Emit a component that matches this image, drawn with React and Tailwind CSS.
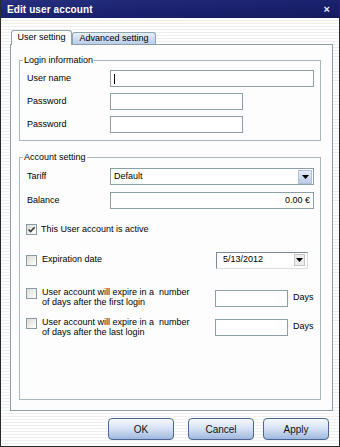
import React from "react";

const font = { fontFamily: '"Liberation Sans", Arial, sans-serif' };

function TextBox({ w, children, align = "left" }) {
    return (
        <div
            className={`h-[17px] border border-[#8c9fa8] bg-white flex items-center px-[3px] text-[9px] text-black ${align === "right" ? "justify-end" : ""}`}
            style={{ width: w }}
        >
            {children}
        </div>
    );
}

function Check({ checked }) {
    return (
        <div className="w-[11px] h-[11px] shrink-0 border border-[#8a9aa6] bg-gradient-to-br from-[#dcdcd8] to-[#ffffff] flex items-center justify-center">
            {checked && (
                <svg width="9" height="9" viewBox="0 0 9 9">
                    <path d="M1.5 4.5 L3.6 6.6 L7.6 2.2" fill="none" stroke="#3a3a3a" strokeWidth="1.6" />
                </svg>
            )}
        </div>
    );
}

function Arrow() {
    return (
        <svg width="7" height="4" viewBox="0 0 7 4">
            <path d="M0 0 H7 L3.5 4 Z" fill="#000" />
        </svg>
    );
}

function Btn({ label, w, className = "" }) {
    return (
        <div
            className={`h-[22px] rounded-[4px] border border-[#4c6690] bg-gradient-to-b from-[#f6f9fe] via-[#d4e0f3] to-[#9fb7de] flex items-center justify-center text-[10px] text-[#111] ${className}`}
            style={{ width: w }}
        >
            {label}
        </div>
    );
}

export default function App() {
    return (
        <div className="w-[340px] h-[447px] flex flex-col border-l border-r border-b border-[#2a2a2a] overflow-hidden" style={font}>
            {/* title bar */}
            <div className="h-[18px] shrink-0 flex items-center justify-between pl-[6px] pr-[9px] bg-gradient-to-br from-[#26307e] via-[#1b2270] to-[#151b5e]">
                <span className="text-white font-bold text-[10px] tracking-[0.1px]">Edit user account</span>
                <span className="text-[#e8ecff] font-bold text-[11px] leading-none">×</span>
            </div>

            <div className="flex-1 flex flex-col bg-[repeating-linear-gradient(180deg,#ffffff_0px,#ffffff_2px,#eeeeee_2px,#eeeeee_3px)]">
                {/* tabs */}
                <div className="flex items-end pl-[10px] pt-[12px] h-[26px]">
                    <div className="relative z-10 h-[15px] w-[61px] -mb-px rounded-t-[3px] border border-b-0 border-[#8fa3b0] bg-[#fcfcfc] flex items-center justify-center text-[9px] text-black">
                        User setting
                    </div>
                    <div className="h-[12px] w-[84px] rounded-t-[3px] border border-b-0 border-[#8fa3b0] bg-gradient-to-b from-[#e6eef8] to-[#b9cde8] flex items-center justify-center text-[9px] text-black">
                        Advanced setting
                    </div>
                </div>

                {/* panel */}
                <div className="ml-[9px] w-[323px] h-[367px] border border-[#8f9ea4] bg-[#fdfdfd] flex flex-col">
                    {/* Login information */}
                    <div className="relative ml-[8px] mt-[15px] w-[302px] h-[81px] border border-[#a8b8bc] flex flex-col pl-[7px] pt-[9px] gap-[6px]">
                        <span className="absolute -top-[7px] left-[3px] bg-[#fdfdfd] px-[1px] text-[9px] text-black leading-[12px]">Login information</span>
                        <div className="flex items-center">
                            <span className="w-[83px] text-[9px] text-black">User name</span>
                            <TextBox w={204}>
                                <span className="w-px h-[10px] bg-black" />
                            </TextBox>
                        </div>
                        <div className="flex items-center">
                            <span className="w-[83px] text-[9px] text-black">Password</span>
                            <TextBox w={133} />
                        </div>
                        <div className="flex items-center">
                            <span className="w-[83px] text-[9px] text-black">Password</span>
                            <TextBox w={133} />
                        </div>
                    </div>

                    {/* Account setting */}
                    <div className="relative ml-[8px] mt-[16px] w-[302px] h-[243px] border border-[#a8b8bc] flex flex-col pl-[6px] pt-[10px]">
                        <span className="absolute -top-[7px] left-[3px] bg-[#fdfdfd] px-[1px] text-[9px] text-black leading-[12px]">Account setting</span>
                        <div className="flex items-center">
                            <span className="w-[84px] pl-[1px] text-[9px] text-black">Tariff</span>
                            <div className="h-[17px] w-[204px] border border-[#8c9fa8] bg-white flex items-center justify-between pl-[3px] pr-px text-[9px] text-black">
                                <span>Default</span>
                                <div className="w-[14px] h-[14px] bg-gradient-to-b from-[#e4ecf8] to-[#bccbe6] border border-[#b0c0d8] flex items-center justify-center">
                                    <Arrow />
                                </div>
                            </div>
                        </div>
                        <div className="flex items-center mt-[7px]">
                            <span className="w-[84px] pl-[1px] text-[9px] text-black">Balance</span>
                            <TextBox w={204} align="right">0.00 €</TextBox>
                        </div>

                        <div className="flex items-center mt-[14px] gap-[4px]">
                            <Check checked />
                            <span className="text-[9px] text-black">This User account is active</span>
                        </div>

                        <div className="flex items-center mt-[15px] h-[17px]">
                            <Check />
                            <span className="ml-[5px] w-[174px] text-[9px] text-black">Expiration date</span>
                            <div className="h-[17px] w-[92px] border border-[#7d8a94] border-r-[#d8dde0] border-b-[#d8dde0] bg-white flex items-center justify-between pl-[6px] pr-[2px] text-[9px] text-black">
                                <span>5/13/2012</span>
                                <div className="w-[11px] h-[12px] bg-[#ececec] border border-[#c6c6c6] flex items-center justify-center">
                                    <Arrow />
                                </div>
                            </div>
                        </div>

                        <div className="flex items-start mt-[17px]">
                            <div className="pt-[2px]">
                                <Check />
                            </div>
                            <div className="ml-[5px] w-[173px] text-[9px] leading-[10px] text-black pt-[1px]">
                                User account will expire in a&nbsp; number
                                <br />
                                of days after the first login
                            </div>
                            <div className="mt-[4px] flex items-center">
                                <TextBox w={73} />
                                <span className="ml-[5px] text-[9px] text-black">Days</span>
                            </div>
                        </div>

                        <div className="flex items-start mt-[9px]">
                            <div className="pt-[2px]">
                                <Check />
                            </div>
                            <div className="ml-[5px] w-[173px] text-[9px] leading-[10px] text-black pt-[1px]">
                                User account will expire in a&nbsp; number
                                <br />
                                of days after the last login
                            </div>
                            <div className="mt-[3px] flex items-center">
                                <TextBox w={73} />
                                <span className="ml-[5px] text-[9px] text-black">Days</span>
                            </div>
                        </div>
                    </div>
                </div>

                {/* buttons */}
                <div className="flex mt-[7px] pl-[107px]">
                    <Btn label="OK" w={66} />
                    <Btn label="Cancel" w={66} className="ml-[14px]" />
                    <Btn label="Apply" w={66} className="ml-[9px]" />
                </div>
            </div>
        </div>
    );
}
